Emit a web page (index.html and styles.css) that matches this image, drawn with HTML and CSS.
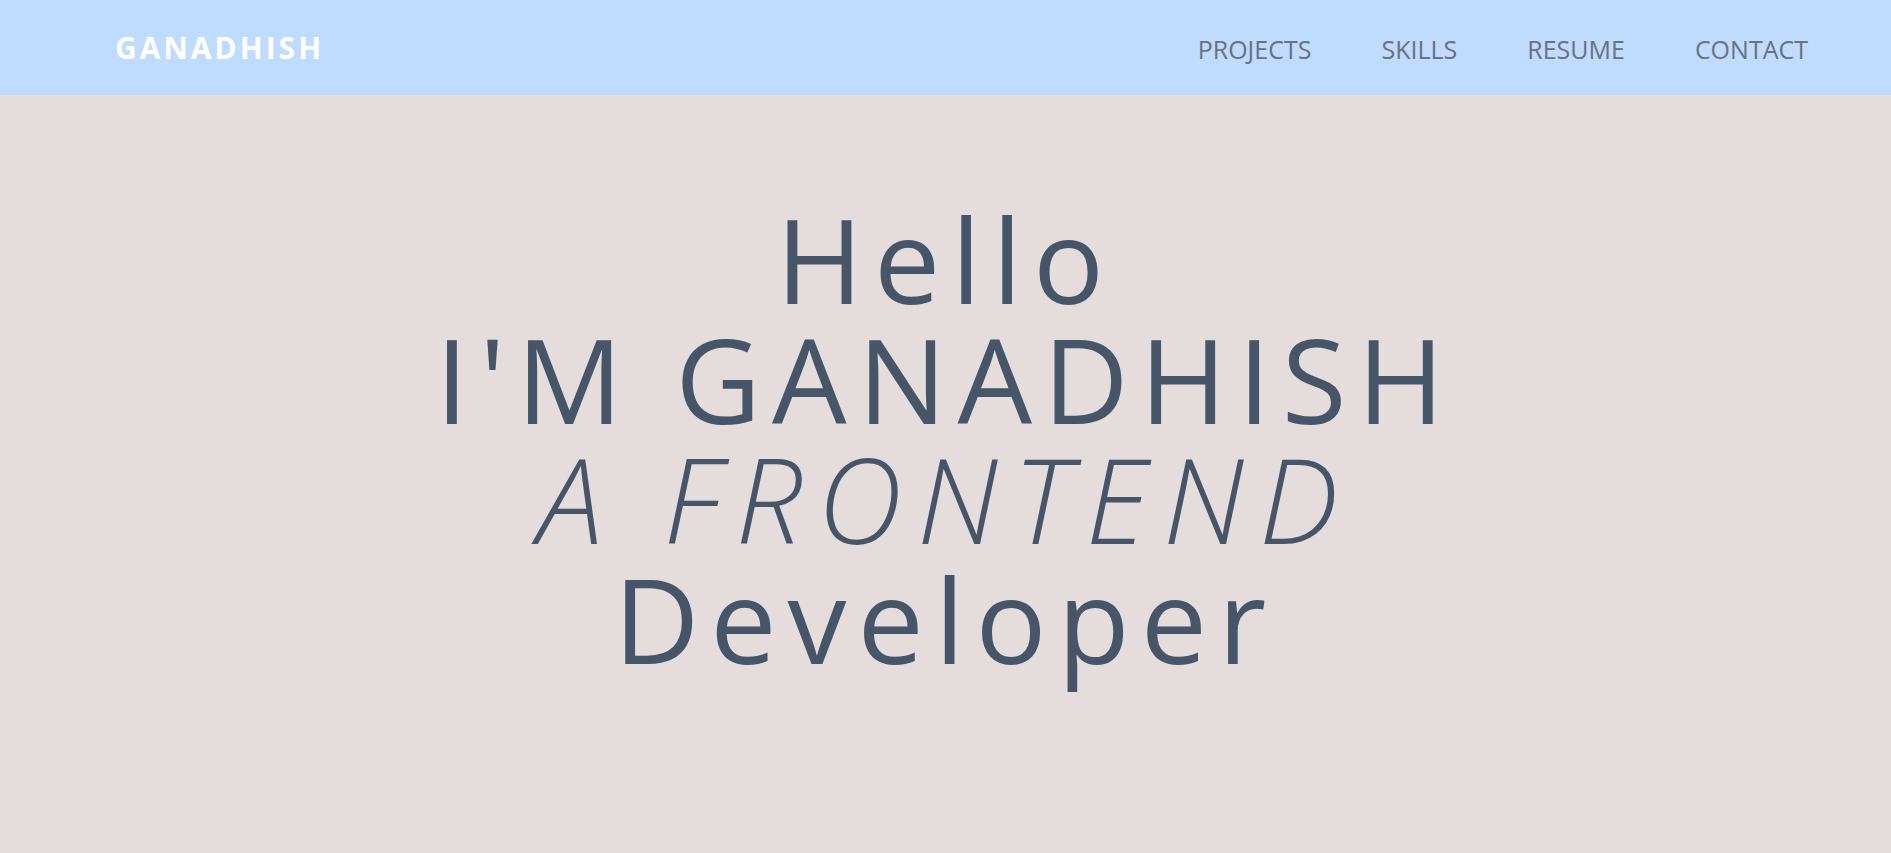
FILE: index.html
```html
<!DOCTYPE html>
<html lang="en">
<head>
<meta charset="utf-8">
<title>Ganadhish</title>
<link rel="stylesheet" href="styles.css">
</head>
<body>
<header class="navbar">
  <a class="brand" href="#">GANADHISH</a>
  <nav class="nav-links">
    <a href="#">PROJECTS</a>
    <a href="#">SKILLS</a>
    <a href="#">RESUME</a>
    <a href="#">CONTACT</a>
  </nav>
</header>
<main class="hero">
  <h1 class="hero-title">
    <span class="line">Hello</span>
    <span class="line">I'M GANADHISH</span>
    <span class="line italic">A FRONTEND</span>
    <span class="line">Developer</span>
  </h1>
</main>
</body>
</html>
```
FILE: styles.css
```css
* { box-sizing: border-box; }
html, body { margin: 0; padding: 0; }
body {
  background: #e5dcdc;
  font-family: "Open Sans", "Noto Sans", sans-serif;
  color: #475569;
  min-height: 853px;
}
.navbar {
  height: 95px;
  background: #bfdbfe;
  display: flex;
  align-items: center;
  justify-content: space-between;
  padding: 0 83px 0 115px;
}
.brand {
  color: #ffffff;
  text-decoration: none;
  font-weight: 700;
  font-size: 30px;
  letter-spacing: 3px;
  line-height: 1;
}
.nav-links {
  display: flex;
  gap: 70px;
  padding-top: 3px;
}
.nav-links a {
  color: #6b7280;
  text-decoration: none;
  font-size: 25px;
  font-weight: 500;
  line-height: 1;
}
.hero {
  display: flex;
  justify-content: center;
  padding-top: 104px;
}
.hero-title {
  margin: 0;
  font-weight: 400;
  font-size: 118px;
  line-height: 120px;
  letter-spacing: 11px;
  text-align: center;
}
.line { display: block; }
.italic { font-style: italic; font-weight: 300; letter-spacing: 15px; }
```
